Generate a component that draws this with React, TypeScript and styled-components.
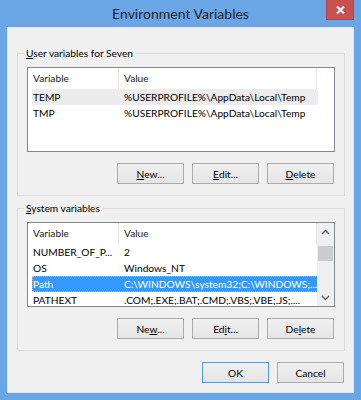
import * as React from "react";
import styled, { createGlobalStyle } from "styled-components";

const GlobalStyle = createGlobalStyle`
  html, body {
    margin: 0;
    padding: 0;
    background: #ffffff;
  }
  * {
    box-sizing: border-box;
  }
`;

const font = `"Lato", "Liberation Sans", sans-serif`;

const Frame = styled.div`
  width: 361px;
  height: 400px;
  background: #6aa6e6;
  padding: 0 7px 7px;
  display: flex;
  flex-direction: column;
  font-family: ${font};
`;

const TitleBar = styled.div`
  height: 27px;
  flex-shrink: 0;
  display: grid;
  grid-template-columns: 1fr auto 1fr;
  align-items: start;
`;

const Title = styled.div`
  grid-column: 2;
  padding-top: 5px;
  font-size: 14px;
  line-height: 18px;
  color: #1e1e1e;
`;

const CloseButton = styled.div`
  grid-column: 3;
  justify-self: end;
  width: 28px;
  height: 20px;
  background: #c75050;
  border: 1px solid #b84343;
  border-top: none;
  display: flex;
  align-items: center;
  justify-content: center;
`;

const Client = styled.div`
  flex: 1;
  background: #f0f0f0;
  border: 1px solid #dfe6ee;
  padding: 18px 8px 8px 9px;
  display: flex;
  flex-direction: column;
  font-size: 10.2px;
  color: #000;
`;

const Group = styled.fieldset<{ $gap?: number }>`
  margin: ${p => p.$gap || 0}px 0 0 0;
  border: 1px solid #dcdcdc;
  padding: 7px 9px 11px 9px;
  min-width: 0;
`;

const Legend = styled.legend`
  padding: 0 2px;
  margin-left: -3px;
  line-height: 14px;
`;

const ListBox = styled.div`
  height: 85px;
  border: 1px solid #828790;
  background: #ffffff;
  display: flex;
  overflow: hidden;
`;

const ListMain = styled.div`
  flex: 1;
  min-width: 0;
  display: flex;
  flex-direction: column;
`;

const Header = styled.div`
  height: 21px;
  flex-shrink: 0;
  display: flex;
`;

const HeaderCell = styled.div<{ $width?: number }>`
  width: ${p => (p.$width ? `${p.$width}px` : "auto")};
  flex: ${p => (p.$width ? "none" : 1)};
  border-right: ${p => (p.$width ? "1px solid #e5e5e5" : "none")};
  padding-left: 5px;
  line-height: 21px;
  color: #1a1a1a;
`;

const Rows = styled.div`
  padding-left: 4px;
`;

const Row = styled.div<{ $state?: "selected" | "inactive" }>`
  width: 286px;
  height: 16px;
  display: grid;
  grid-template-columns: 86px 1fr;
  line-height: 16px;
  white-space: nowrap;
  overflow: hidden;
  background: ${p =>
    p.$state === "selected" ? "#3399ff" : p.$state === "inactive" ? "#ececec" : "transparent"};
  color: ${p => (p.$state === "selected" ? "#ffffff" : "#000000")};
  outline: ${p => (p.$state === "selected" ? "1px dotted #f3a79b" : "none")};
  outline-offset: -1px;
`;

const NameCell = styled.div`
  padding-left: 1px;
  overflow: hidden;
`;

const ValueCell = styled.div`
  padding-left: 6px;
  overflow: hidden;
`;

const ScrollBar = styled.div`
  width: 17px;
  flex-shrink: 0;
  background: #f0f0f0;
  display: flex;
  flex-direction: column;
`;

const ScrollArrow = styled.div`
  height: 17px;
  flex-shrink: 0;
  display: flex;
  align-items: center;
  justify-content: center;
`;

const ScrollTrack = styled.div`
  flex: 1;
  padding: 0 1px;
`;

const Thumb = styled.div`
  height: 15px;
  background: #cdcdcd;
`;

const ButtonRow = styled.div<{ $top?: number }>`
  margin-top: ${p => p.$top || 0}px;
  padding-right: 1px;
  display: flex;
  justify-content: flex-end;
  gap: 8px;
`;

const Button = styled.div<{ $default?: boolean }>`
  width: 67px;
  height: 21px;
  border: 1px solid ${p => (p.$default ? "#4c9be8" : "#acacac")};
  background: linear-gradient(#f0f0f0, #e5e5e5);
  display: flex;
  align-items: center;
  justify-content: center;
  color: #000;
`;

const Chevron = ({ up }: { up?: boolean }) => (
  <svg width="9" height="6" viewBox="0 0 9 6">
    <path
      d={up ? "M1 5 L4.5 1.5 L8 5" : "M1 1 L4.5 4.5 L8 1"}
      fill="none"
      stroke="#606060"
      strokeWidth="1.5"
    />
  </svg>
);

interface Variable {
  name: string;
  value: string;
  state?: "selected" | "inactive";
}

const userVars: Variable[] = [
  { name: "TEMP", value: "%USERPROFILE%\\AppData\\Local\\Temp", state: "inactive" },
  { name: "TMP", value: "%USERPROFILE%\\AppData\\Local\\Temp" },
];

const systemVars: Variable[] = [
  { name: "NUMBER_OF_P...", value: "2" },
  { name: "OS", value: "Windows_NT" },
  { name: "Path", value: "C:\\WINDOWS\\system32;C:\\WINDOWS;...", state: "selected" },
  { name: "PATHEXT", value: ".COM;.EXE;.BAT;.CMD;.VBS;.VBE;.JS;...." },
];

class VariableList extends React.Component<{ list: Variable[]; scroll?: number }> {
  renderRows(list: Variable[]) {
    return list.map((item, i) => (
      <Row key={i} $state={item.state}>
        <NameCell>{item.name}</NameCell>
        <ValueCell>{item.value}</ValueCell>
      </Row>
    ));
  }

  render() {
    const { list, scroll } = this.props;
    return (
      <ListBox>
        <ListMain>
          <Header>
            <HeaderCell $width={91}>Variable</HeaderCell>
            <HeaderCell $width={198}>Value</HeaderCell>
            <HeaderCell />
          </Header>
          <Rows>{this.renderRows(list)}</Rows>
        </ListMain>
        {scroll !== undefined && (
          <ScrollBar>
            <ScrollArrow>
              <Chevron up />
            </ScrollArrow>
            <ScrollTrack>
              <Thumb style={{ marginTop: scroll }} />
            </ScrollTrack>
            <ScrollArrow>
              <Chevron />
            </ScrollArrow>
          </ScrollBar>
        )}
      </ListBox>
    );
  }
}

export default function App() {
  return (
    <>
      <GlobalStyle />
      <Frame>
        <TitleBar>
          <Title>Environment Variables</Title>
          <CloseButton>
            <svg width="9" height="8" viewBox="0 0 9 8">
              <path d="M1 0.5 L8 7.5 M8 0.5 L1 7.5" stroke="#ffffff" strokeWidth="2" />
            </svg>
          </CloseButton>
        </TitleBar>
        <Client>
          <Group>
            <Legend>
              <u>U</u>ser variables for Seven
            </Legend>
            <VariableList list={userVars} />
            <ButtonRow $top={11}>
              <Button>
                <u>N</u>ew...
              </Button>
              <Button>
                <u>E</u>dit...
              </Button>
              <Button>
                <u>D</u>elete
              </Button>
            </ButtonRow>
          </Group>
          <Group $gap={5}>
            <Legend>
              <u>S</u>ystem variables
            </Legend>
            <VariableList list={systemVars} scroll={6} />
            <ButtonRow $top={11}>
              <Button>
                Ne<u>w</u>...
              </Button>
              <Button>
                Ed<u>i</u>t...
              </Button>
              <Button>
                De<u>l</u>ete
              </Button>
            </ButtonRow>
          </Group>
          <ButtonRow $top={11}>
            <Button $default>OK</Button>
            <Button>Cancel</Button>
          </ButtonRow>
        </Client>
      </Frame>
    </>
  );
}
